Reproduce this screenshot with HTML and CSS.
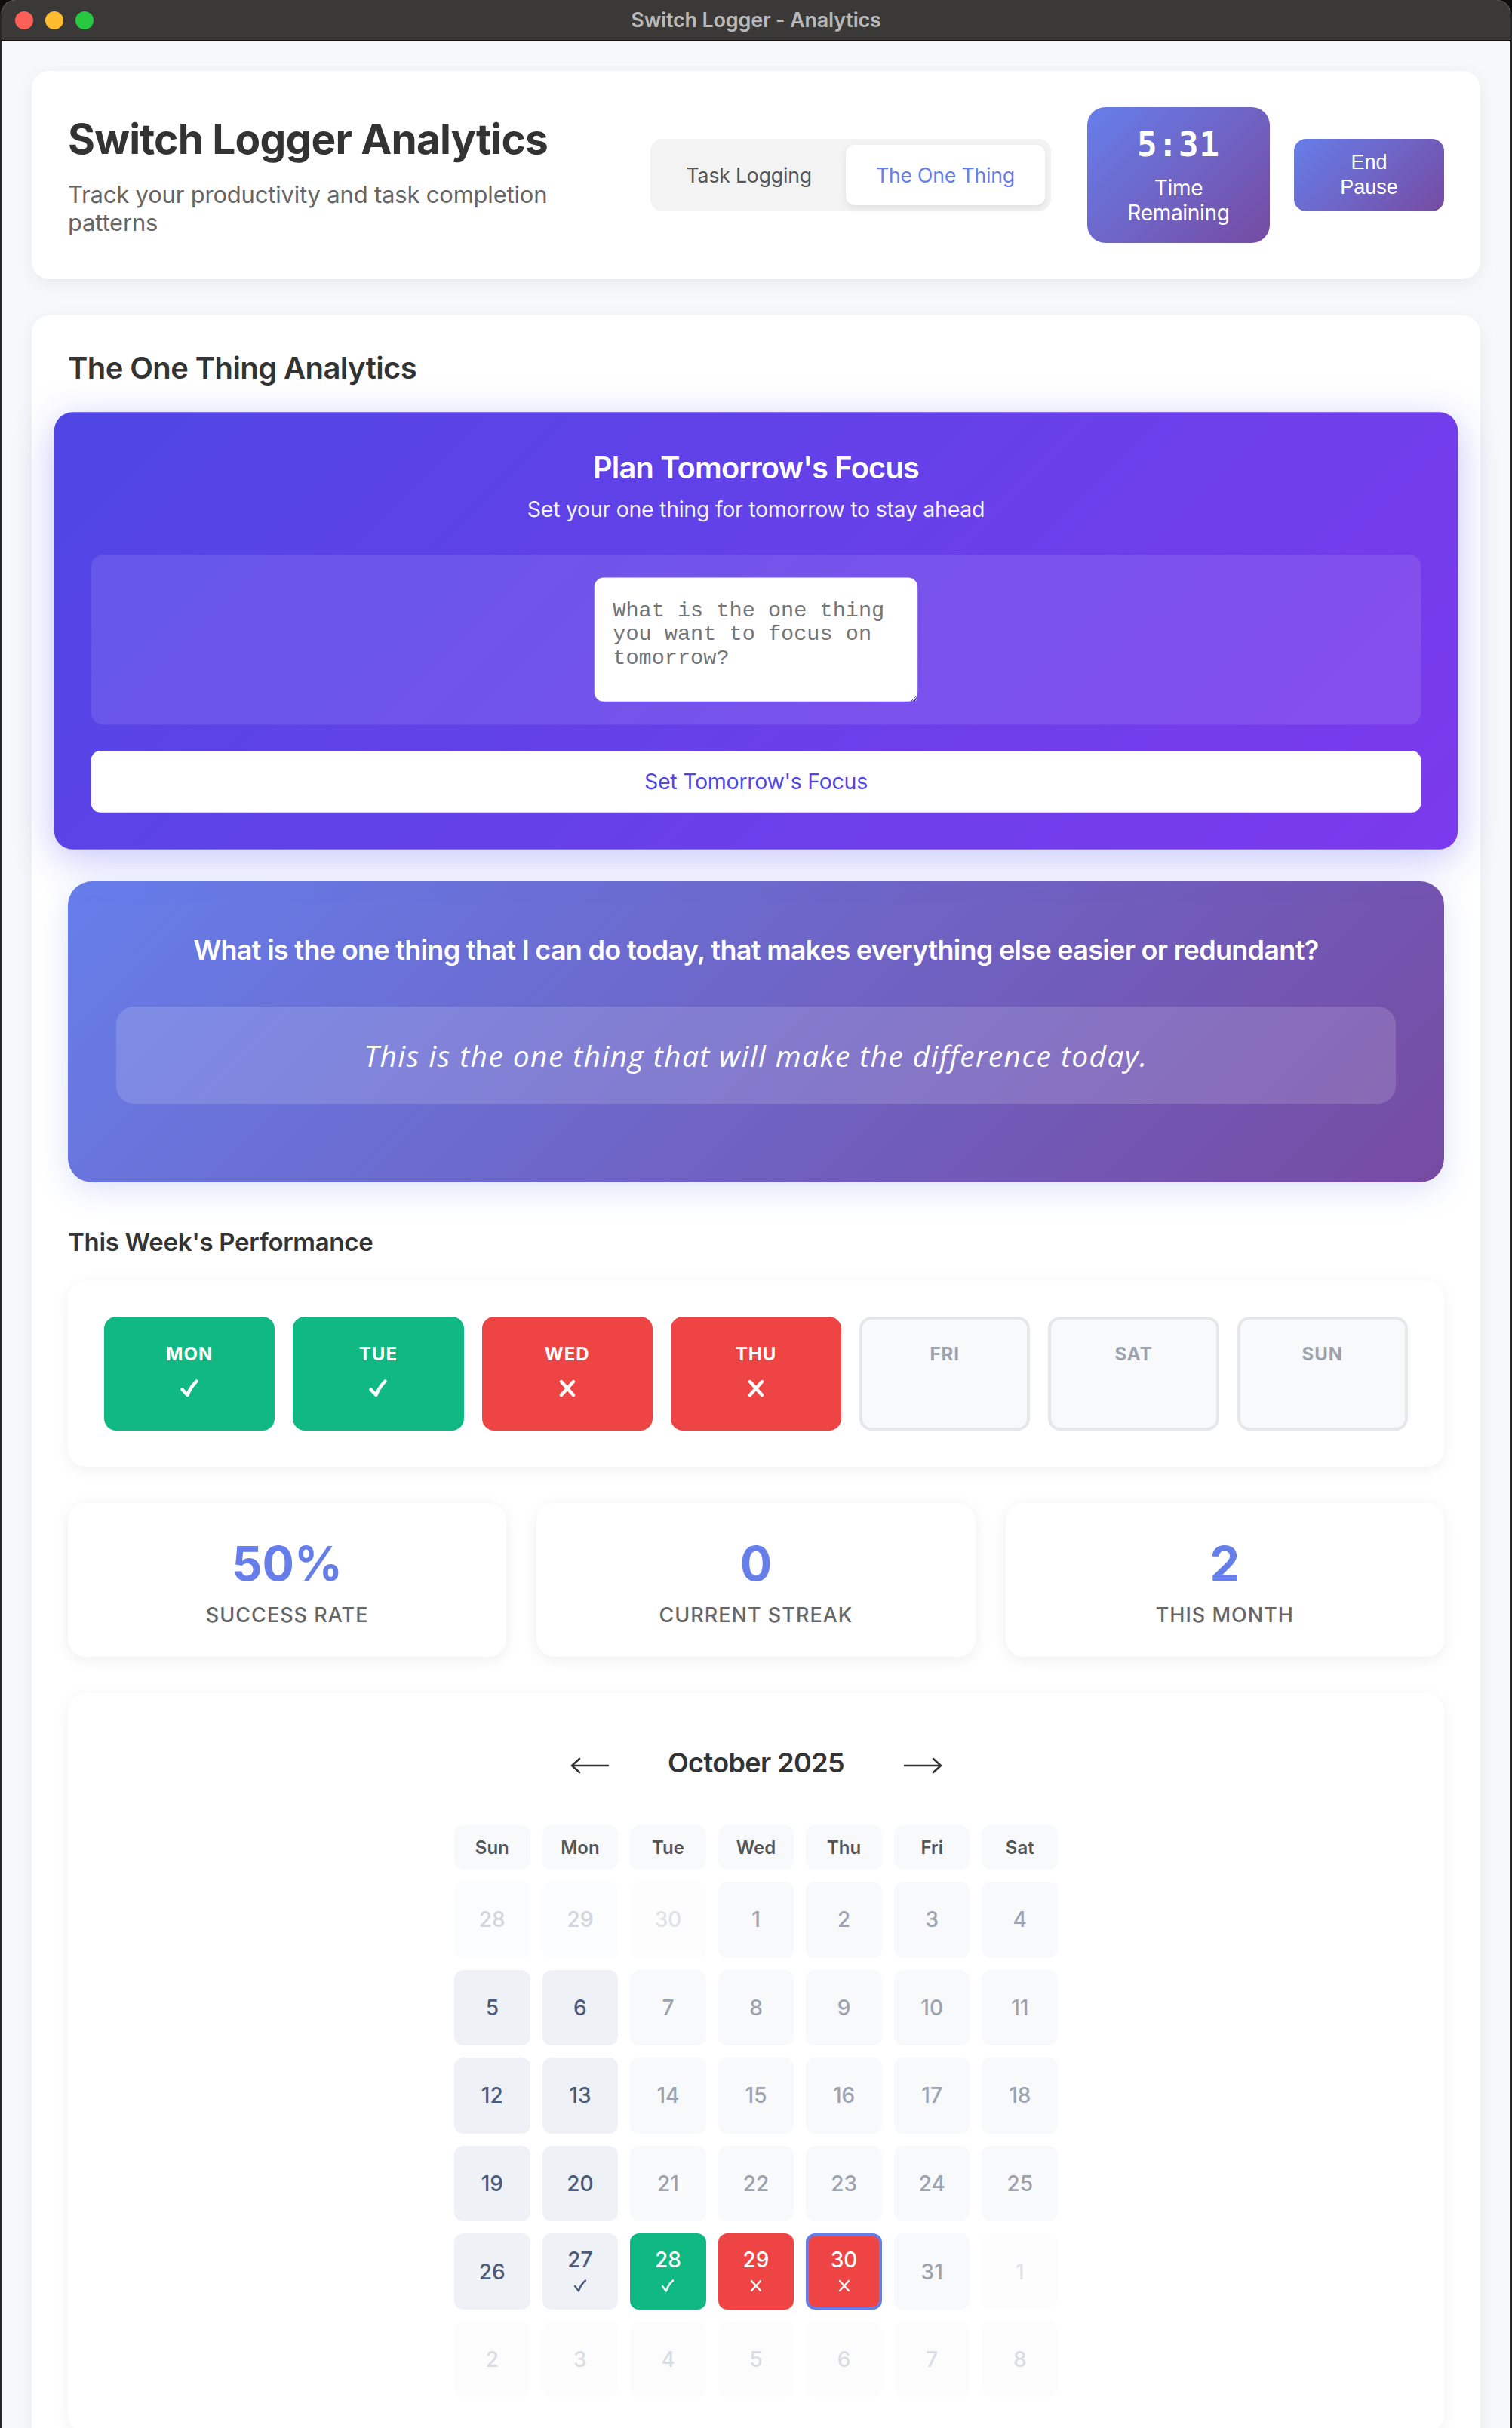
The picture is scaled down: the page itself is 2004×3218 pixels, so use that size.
FILE: index.html
```html
<!DOCTYPE html>
<html lang="en">
<head>
<meta charset="utf-8">
<title>Switch Logger - Analytics</title>
<link rel="stylesheet" href="styles.css">
</head>
<body>
<div class="window">
  <div class="titlebar">
    <div class="lights">
      <span class="light red"></span>
      <span class="light yellow"></span>
      <span class="light green"></span>
    </div>
    <div class="wintitle">Switch Logger - Analytics</div>
    <div></div>
  </div>

  <main class="page">
    <header class="header">
      <div class="brand">
        <h1>Switch Logger Analytics</h1>
        <p>Track your productivity and task completion patterns</p>
      </div>
      <div class="controls">
        <nav class="tabs">
          <button class="tab">Task Logging</button>
          <button class="tab active">The One Thing</button>
        </nav>
        <div class="timer-group">
          <div class="timer">
            <div class="time">5:31</div>
            <div class="timer-label">Time Remaining</div>
          </div>
          <button class="end-btn">End Pause</button>
        </div>
      </div>
    </header>

    <section class="analytics">
      <h2 class="section-title">The One Thing Analytics</h2>

      <div class="plan-card">
        <h3 class="plan-title">Plan Tomorrow's Focus</h3>
        <p class="plan-sub">Set your one thing for tomorrow to stay ahead</p>
        <div class="input-area">
          <textarea class="focus-input" placeholder="What is the one thing you want to focus on tomorrow?"></textarea>
        </div>
        <button class="set-btn">Set Tomorrow's Focus</button>
      </div>

      <div class="question-card">
        <p class="question">What is the one thing that I can do today, that makes everything else easier or redundant?</p>
        <div class="quote">This is the one thing that will make the difference today.</div>
      </div>

      <h3 class="week-title">This Week's Performance</h3>
      <div class="week-card">
        <div class="day done"><span class="day-name">MON</span><svg class="day-mark" viewBox="0 0 26 24"><path d="M3.5 13.5 L10.5 21 Q14 11 22.5 2.5"/></svg></div>
        <div class="day done"><span class="day-name">TUE</span><svg class="day-mark" viewBox="0 0 26 24"><path d="M3.5 13.5 L10.5 21 Q14 11 22.5 2.5"/></svg></div>
        <div class="day miss"><span class="day-name">WED</span><svg class="day-mark" viewBox="0 0 26 24"><path d="M5 3 L21 21 M21 3 L5 21"/></svg></div>
        <div class="day miss"><span class="day-name">THU</span><svg class="day-mark" viewBox="0 0 26 24"><path d="M5 3 L21 21 M21 3 L5 21"/></svg></div>
        <div class="day empty"><span class="day-name">FRI</span></div>
        <div class="day empty"><span class="day-name">SAT</span></div>
        <div class="day empty"><span class="day-name">SUN</span></div>
      </div>

      <div class="stats">
        <div class="stat"><div class="stat-value">50%</div><div class="stat-label">Success Rate</div></div>
        <div class="stat"><div class="stat-value">0</div><div class="stat-label">Current Streak</div></div>
        <div class="stat"><div class="stat-value">2</div><div class="stat-label">This Month</div></div>
      </div>

      <div class="calendar-card">
        <div class="cal-nav">
          <button class="cal-arrow" aria-label="Previous month"><svg viewBox="0 0 52 22"><path d="M2 11 H50 M12 2 L2 11 L12 20"/></svg></button>
          <div class="cal-title">October 2025</div>
          <button class="cal-arrow" aria-label="Next month"><svg viewBox="0 0 52 22"><path d="M2 11 H50 M40 2 L50 11 L40 20"/></svg></button>
        </div>
        <div class="cal-grid">
          <div class="cal-head">Sun</div><div class="cal-head">Mon</div><div class="cal-head">Tue</div><div class="cal-head">Wed</div><div class="cal-head">Thu</div><div class="cal-head">Fri</div><div class="cal-head">Sat</div>

          <div class="cal-day other">28</div><div class="cal-day other">29</div><div class="cal-day other faint">30</div><div class="cal-day">1</div><div class="cal-day">2</div><div class="cal-day">3</div><div class="cal-day">4</div>

          <div class="cal-day worked">5</div><div class="cal-day worked">6</div><div class="cal-day">7</div><div class="cal-day">8</div><div class="cal-day">9</div><div class="cal-day">10</div><div class="cal-day">11</div>

          <div class="cal-day worked">12</div><div class="cal-day worked">13</div><div class="cal-day">14</div><div class="cal-day">15</div><div class="cal-day">16</div><div class="cal-day">17</div><div class="cal-day">18</div>

          <div class="cal-day worked">19</div><div class="cal-day worked">20</div><div class="cal-day">21</div><div class="cal-day">22</div><div class="cal-day">23</div><div class="cal-day">24</div><div class="cal-day">25</div>

          <div class="cal-day worked">26</div>
          <div class="cal-day worked marked"><span class="cal-num">27</span><svg class="cal-mark" viewBox="0 0 18 17"><path d="M2 9 L7 15.5 Q9.5 7 16 1.5"/></svg></div>
          <div class="cal-day done marked"><span class="cal-num">28</span><svg class="cal-mark" viewBox="0 0 18 17"><path d="M2 9 L7 15.5 Q9.5 7 16 1.5"/></svg></div>
          <div class="cal-day miss marked"><span class="cal-num">29</span><svg class="cal-mark" viewBox="0 0 18 17"><path d="M3 2 L15 15 M15 2 L3 15"/></svg></div>
          <div class="cal-day miss today marked"><span class="cal-num">30</span><svg class="cal-mark" viewBox="0 0 18 17"><path d="M3 2 L15 15 M15 2 L3 15"/></svg></div>
          <div class="cal-day">31</div>
          <div class="cal-day other faint">1</div>

          <div class="cal-day other next">2</div><div class="cal-day other next">3</div><div class="cal-day other next">4</div><div class="cal-day other next">5</div><div class="cal-day other next">6</div><div class="cal-day other next">7</div><div class="cal-day other next">8</div>
        </div>
      </div>
    </section>
  </main>
</div>
</body>
</html>
```

FILE: styles.css
```css
* {
  box-sizing: border-box;
  margin: 0;
  padding: 0;
}

html,
body {
  background: #0e0e0e;
}

body {
  font-family: Inter, "Liberation Sans", sans-serif;
  color: #333;
  overflow: hidden;
}

.window {
  border-left: 2px solid #262626;
  border-right: 2px solid #262626;
  border-radius: 20px 20px 0 0;
  background: #f7f8fa;
  min-height: 3218px;
  overflow: hidden;
}

/* ---------- title bar ---------- */
.titlebar {
  height: 54px;
  background: #3a3938;
  border-bottom: 1px solid #141414;
  display: grid;
  grid-template-columns: 1fr auto 1fr;
  align-items: center;
}

.lights {
  display: flex;
  gap: 16px;
  padding-left: 18px;
}

.light {
  width: 24px;
  height: 24px;
  border-radius: 50%;
}

.light.red { background: #fe5f57; }
.light.yellow { background: #febc2e; }
.light.green { background: #28c840; }

.wintitle {
  font-size: 27px;
  font-weight: 600;
  color: #b9b9b9;
  letter-spacing: -0.2px;
}

/* ---------- page ---------- */
.page {
  padding: 40px 40px 0 40px;
}

.header {
  background: #fff;
  border-radius: 24px;
  padding: 48px;
  display: flex;
  justify-content: space-between;
  align-items: center;
  box-shadow: 0 6px 24px rgba(0, 0, 0, 0.06);
  margin-bottom: 48px;
}

.brand {
  width: 700px;
}

.brand h1 {
  font-size: 55px;
  font-weight: 700;
  line-height: 66px;
  letter-spacing: -0.8px;
  white-space: nowrap;
  color: #333;
  margin-bottom: 22px;
}

.brand p {
  font-size: 31px;
  line-height: 37px;
  color: #666;
  letter-spacing: -0.2px;
  width: 660px;
}

.controls {
  display: flex;
  align-items: center;
  gap: 48px;
}

.tabs {
  display: flex;
  gap: 5px;
  padding: 8px;
  background: #f3f3f4;
  border-radius: 16px;
}

.tab {
  height: 80px;
  padding: 0 40px;
  border: none;
  border-radius: 12px;
  background: transparent;
  font-family: Inter, "Liberation Sans", sans-serif;
  font-size: 26.67px;
  letter-spacing: -0.2px;
  color: #555;
}

.tab.active {
  background: #fff;
  color: #667eea;
  box-shadow: 0 4px 10px rgba(0, 0, 0, 0.08);
}

.timer-group {
  display: flex;
  align-items: center;
  gap: 32px;
}

.timer {
  width: 242px;
  padding: 24px 24px 23px;
  border-radius: 24px;
  background: linear-gradient(135deg, #667eea, #764ba2);
  color: #fff;
  text-align: center;
}

.time {
  font-family: "DejaVu Sans Mono", "Liberation Mono", monospace;
  font-weight: 700;
  font-size: 44px;
  line-height: 52px;
  letter-spacing: 1px;
}

.timer-label {
  font-size: 28px;
  line-height: 33px;
  margin-top: 15px;
  letter-spacing: -0.3px;
}

.end-btn {
  width: 199px;
  height: 96px;
  padding: 0 44px;
  border: none;
  border-radius: 16px;
  background: linear-gradient(135deg, #667eea, #764ba2);
  color: #fff;
  font-family: "Liberation Sans", Arial, sans-serif;
  font-size: 27px;
  line-height: 33px;
}

/* ---------- analytics section ---------- */
.analytics {
  background: #fff;
  border-radius: 24px 24px 0 0;
  padding: 48px;
  box-shadow: 0 6px 24px rgba(0, 0, 0, 0.06);
  min-height: 2900px;
}

.section-title {
  font-size: 40px;
  font-weight: 600;
  line-height: 44px;
  letter-spacing: -0.6px;
  color: #333;
  margin-bottom: 42px;
}

.plan-card {
  transform: scale(1.02);
  background: linear-gradient(135deg, #4f46e5, #7c3aed);
  border-radius: 24px;
  padding: 48px;
  color: #fff;
  text-align: center;
  box-shadow: 0 12px 50px rgba(99, 102, 241, 0.38);
}

.plan-title {
  font-size: 39px;
  font-weight: 600;
  line-height: 47px;
  letter-spacing: -0.8px;
  margin-bottom: 14px;
}

.plan-sub {
  font-size: 28px;
  line-height: 34px;
  letter-spacing: -0.3px;
  opacity: 0.92;
  margin-bottom: 42px;
}

.input-area {
  background: rgba(255, 255, 255, 0.1);
  border-radius: 16px;
  padding: 30px;
  display: flex;
  justify-content: center;
}

.focus-input {
  width: 420px;
  height: 161px;
  padding: 27px 24px;
  border: none;
  border-radius: 12px;
  background: #fff;
  font-family: "Liberation Mono", "Courier New", monospace;
  font-size: 28px;
  line-height: 31px;
  color: #333;
  resize: both;
  outline: none;
}

.focus-input::placeholder {
  color: #757575;
}

.set-btn {
  display: block;
  width: 100%;
  height: 80px;
  margin-top: 34px;
  border: none;
  border-radius: 12px;
  background: #fff;
  color: #4f46e5;
  font-family: Inter, "Liberation Sans", sans-serif;
  font-size: 28px;
  letter-spacing: -0.3px;
}

.question-card {
  margin-top: 48px;
  background: linear-gradient(135deg, #667eea, #764ba2);
  border-radius: 32px;
  padding: 68px 64px 104px;
  color: #fff;
  text-align: center;
  box-shadow: 0 10px 40px rgba(102, 126, 234, 0.22);
}

.question {
  font-size: 36px;
  font-weight: 600;
  line-height: 47px;
  letter-spacing: -0.7px;
  margin-bottom: 51px;
}

.quote {
  background: rgba(255, 255, 255, 0.15);
  border-radius: 24px;
  padding: 34px 32px;
  font-family: "Open Sans", Inter, sans-serif;
  font-style: italic;
  font-weight: 400;
  font-size: 39px;
  line-height: 61px;
  letter-spacing: 1.4px;
}

.week-title {
  font-size: 33px;
  font-weight: 600;
  line-height: 38px;
  letter-spacing: -0.3px;
  color: #333;
  margin: 60px 0 32px;
}

.week-card {
  background: #fff;
  border-radius: 24px;
  padding: 48px;
  box-shadow: 0 4px 20px rgba(0, 0, 0, 0.06);
  display: grid;
  grid-template-columns: repeat(7, 1fr);
  gap: 24px;
}

.day {
  height: 151px;
  border-radius: 16px;
  border: 4px solid transparent;
  padding-top: 32px;
  display: flex;
  flex-direction: column;
  align-items: center;
}

.day-name {
  font-size: 24px;
  font-weight: 700;
  line-height: 28px;
  letter-spacing: 1px;
}

.day-mark {
  margin-top: 19px;
  width: 26px;
  height: 24px;
  fill: none;
  stroke: #fff;
  stroke-width: 4.4;
  stroke-linecap: round;
  stroke-linejoin: round;
}

.day.done {
  background: #10b981;
  border-color: #10b981;
  color: #fff;
}

.day.miss {
  background: #ef4444;
  border-color: #ef4444;
  color: #fff;
}

.day.empty {
  background: #f8f9fa;
  border-color: #e5e7eb;
  color: #9ca3af;
}

.stats {
  margin-top: 48px;
  display: grid;
  grid-template-columns: repeat(3, 1fr);
  gap: 40px;
}

.stat {
  background: #fff;
  border-radius: 24px;
  padding: 42px 32px 38px;
  text-align: center;
  box-shadow: 0 4px 20px rgba(0, 0, 0, 0.07);
}

.stat-value {
  font-size: 63px;
  font-weight: 700;
  line-height: 77px;
  color: #667eea;
  margin-bottom: 13px;
}

.stat-label {
  font-size: 27px;
  font-weight: 500;
  line-height: 34px;
  letter-spacing: 1px;
  text-transform: uppercase;
  color: #666;
}

/* ---------- calendar ---------- */
.calendar-card {
  margin-top: 48px;
  background: #fff;
  border-radius: 24px;
  padding: 64px 48px 48px;
  box-shadow: 0 4px 20px rgba(0, 0, 0, 0.06);
}

.cal-nav {
  display: grid;
  grid-template-columns: 52px 233px 52px;
  column-gap: 78px;
  justify-content: center;
  align-items: center;
  height: 64px;
  margin-bottom: 47px;
}

.cal-title {
  display: flex;
  justify-content: center;
  white-space: nowrap;
  font-size: 36px;
  font-weight: 600;
  line-height: 43px;
  letter-spacing: -0.6px;
  color: #333;
  margin-bottom: 8px;
}

.cal-arrow {
  width: 52px;
  height: 22px;
  border: none;
  background: none;
  display: block;
}

.cal-arrow svg {
  width: 52px;
  height: 22px;
  display: block;
  fill: none;
  stroke: #333;
  stroke-width: 2.6;
  stroke-linecap: round;
  stroke-linejoin: round;
}

.cal-grid {
  width: 800px;
  margin: 0 auto;
  display: grid;
  grid-template-columns: repeat(7, 1fr);
  gap: 16px;
}

.cal-head {
  height: 59px;
  display: flex;
  align-items: center;
  justify-content: center;
  background: #f8f9fa;
  border-radius: 12px;
  font-size: 24px;
  font-weight: 600;
  color: #555;
}

.cal-day {
  aspect-ratio: 1;
  border-radius: 12px;
  display: flex;
  flex-direction: column;
  align-items: center;
  justify-content: center;
  font-size: 28px;
  font-weight: 500;
  line-height: 34px;
  background: #f8f9fb;
  color: #9ca3af;
}

.cal-day.marked {
  justify-content: flex-start;
  padding-top: 18px;
}

.cal-day.today.marked {
  padding-top: 14px;
}

.cal-num {
  display: block;
  height: 34px;
  line-height: 34px;
}

.cal-mark {
  display: block;
  flex: 0 0 auto;
  width: 18px;
  height: 17px;
  margin-top: 9px;
  fill: none;
  stroke: currentColor;
  stroke-width: 2.4;
  stroke-linecap: round;
  stroke-linejoin: round;
}

.cal-day.other {
  background: #fbfcfd;
  color: #d2d6dc;
}

.cal-day.other.faint {
  background: #fdfdfe;
  color: #dfe2e6;
}

.cal-day.other.next {
  background: #fcfcfd;
  color: #dadde2;
}

.cal-day.worked {
  background: #eef2f7;
  color: #4b5b79;
}

.cal-day.done {
  background: #10b981;
  color: #fff;
}

.cal-day.miss {
  background: #ef4444;
  color: #fff;
}

.cal-day.today {
  border: 4px solid #667eea;
}
```
